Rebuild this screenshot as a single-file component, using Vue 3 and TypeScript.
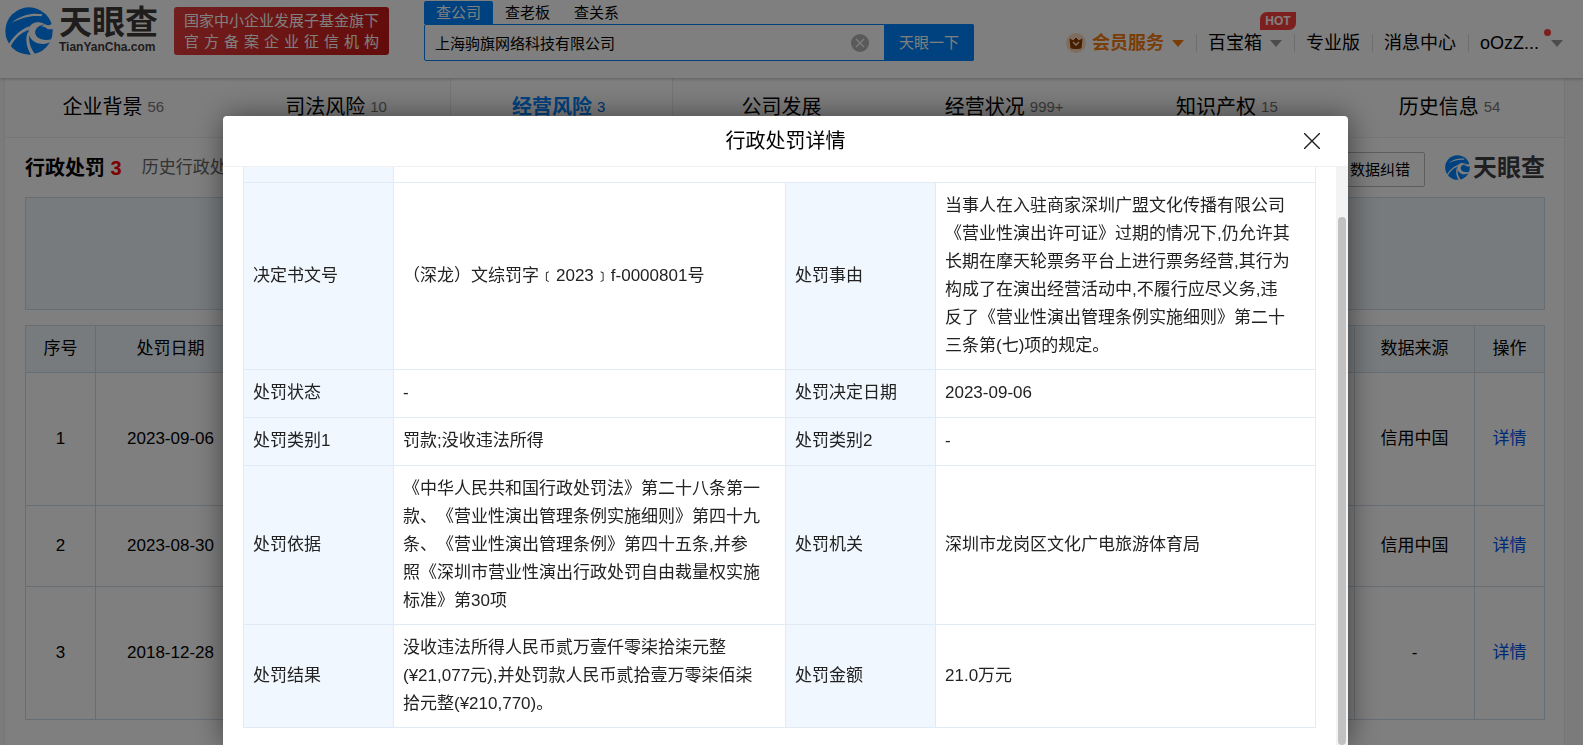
<script setup lang="ts">
import { ref } from 'vue'

interface DetailRow {
  label: string
  value: string
  label2: string
  value2: string
}

interface PenaltyRow {
  index: number
  date: string
  source: string
  size: 'tall' | 'short'
}

const keyword = ref('上海驹旗网络科技有限公司')

const searchTabs = ['查公司', '查老板', '查关系']

const sections = [
  { name: '企业背景', count: '56' },
  { name: '司法风险', count: '10' },
  { name: '经营风险', count: '3' },
  { name: '公司发展', count: '' },
  { name: '经营状况', count: '999+' },
  { name: '知识产权', count: '15' },
  { name: '历史信息', count: '54' },
]

const penalties: PenaltyRow[] = [
  { index: 1, date: '2023-09-06', source: '信用中国', size: 'tall' },
  { index: 2, date: '2023-08-30', source: '信用中国', size: 'short' },
  { index: 3, date: '2018-12-28', source: '-', size: 'tall' },
]

const details: DetailRow[] = [
  {
    label: '决定书文号',
    value: '（深龙）文综罚字﹝2023﹞f-0000801号',
    label2: '处罚事由',
    value2:
      '当事人在入驻商家深圳广盟文化传播有限公司\n《营业性演出许可证》过期的情况下,仍允许其\n长期在摩天轮票务平台上进行票务经营,其行为\n构成了在演出经营活动中,不履行应尽义务,违\n反了《营业性演出管理条例实施细则》第二十\n三条第(七)项的规定。',
  },
  { label: '处罚状态', value: '-', label2: '处罚决定日期', value2: '2023-09-06' },
  { label: '处罚类别1', value: '罚款;没收违法所得', label2: '处罚类别2', value2: '-' },
  {
    label: '处罚依据',
    value:
      '《中华人民共和国行政处罚法》第二十八条第一\n款、《营业性演出管理条例实施细则》第四十九\n条、《营业性演出管理条例》第四十五条,并参\n照《深圳市营业性演出行政处罚自由裁量权实施\n标准》第30项',
    label2: '处罚机关',
    value2: '深圳市龙岗区文化广电旅游体育局',
  },
  {
    label: '处罚结果',
    value:
      '没收违法所得人民币贰万壹仟零柒拾柒元整\n(¥21,077元),并处罚款人民币贰拾壹万零柒佰柒\n拾元整(¥210,770)。',
    label2: '处罚金额',
    value2: '21.0万元',
  },
]
</script>

<template>
  <div class="page">
    <header class="header">
      <a class="logo" href="#" aria-label="天眼查">
        <svg class="logo-mark" viewBox="9 8 144 144" aria-hidden="true">
          <circle cx="81" cy="80" r="71" fill="#0084ff" />
          <path
            d="M156 50C148 64 139 66 128 59C108 48 88 54 81 70C76 90 84 104 100 114C114 121 130 121 146 112L149 105C130 109 112 106 103 94C96 82 101 70 116 67C126 66 132 70 136 74C144 76 152 74 160 70Z"
            fill="#fff"
          />
          <path d="M128 60C118 62 106 66 101 78C98 88 104 98 112 102C102 84 108 72 128 60Z" fill="#0084ff" />
          <path d="M28 56C62 28 96 26 122 30L118 36C92 32 62 38 28 56Z" fill="#fff" />
          <path d="M82 66C52 78 32 98 18 124L24 130C36 104 54 86 80 76Z" fill="#fff" />
          <path d="M78 82C68 104 74 132 88 153L100 151C84 130 78 108 83 88Z" fill="#fff" />
        </svg>
        <span class="logo-words">
          <span class="logo-name">天眼查</span>
          <span class="logo-site">TianYanCha.com</span>
        </span>
      </a>
      <div class="banner">
        <span>国家中小企业发展子基金旗下</span>
        <span>官方备案企业征信机构</span>
      </div>

      <form class="search" @submit.prevent>
        <div class="search-tabs">
          <button
            v-for="(tab, i) in searchTabs"
            :key="tab"
            type="button"
            class="search-tab"
            :class="{ active: i === 0 }"
          >
            {{ tab }}
          </button>
        </div>
        <div class="search-box">
          <input v-model="keyword" class="search-input" type="text" aria-label="搜索公司" />
          <button class="clear" type="button" aria-label="清空">
            <svg viewBox="0 0 18 18" aria-hidden="true">
              <circle cx="9" cy="9" r="9" fill="#b4b4b4" />
              <path d="M5 5l8 8M13 5l-8 8" stroke="#fff" stroke-width="1.2" />
            </svg>
          </button>
          <button class="submit" type="submit">天眼一下</button>
        </div>
      </form>

      <nav class="nav">
        <a class="nav-item vip" href="#">
          <svg class="crown" viewBox="0 0 20 20" aria-hidden="true">
            <circle cx="10" cy="10" r="10" fill="#fcd9bd" />
            <path
              d="M4 6l3 2 3-3 3 3 3-2-1 9q-5 1-10 0z"
              fill="#8c3c00"
              stroke="#8c3c00"
              stroke-linejoin="round"
            />
            <path d="M7 9l3 3 3-3" fill="none" stroke="#fcd9bd" stroke-width="1.6" />
          </svg>
          会员服务<i class="caret"></i>
        </a>
        <a class="nav-item tools" href="#">百宝箱<i class="caret"></i><em class="hot">HOT</em></a>
        <a class="nav-item" href="#">专业版</a>
        <a class="nav-item" href="#">消息中心</a>
        <a class="nav-item user" href="#">oOzZ...<i class="caret"></i><i class="dot"></i></a>
      </nav>
    </header>

    <main class="container">
      <nav class="sections">
        <a
          v-for="(s, i) in sections"
          :key="s.name"
          href="#"
          class="section"
          :class="{ active: i === 2 }"
        >
          {{ s.name }}<span v-if="s.count" class="count">{{ s.count }}</span>
        </a>
      </nav>

      <section class="panel">
        <div class="panel-head">
          <h2>行政处罚 <b>3</b></h2>
          <a class="history" href="#">历史行政处罚</a>
          <button class="report" type="button">数据纠错</button>
          <span class="brand">
            <svg class="brand-mark" viewBox="9 8 144 144" aria-hidden="true">
              <circle cx="81" cy="80" r="71" fill="#0084ff" />
              <path
                d="M156 50C148 64 139 66 128 59C108 48 88 54 81 70C76 90 84 104 100 114C114 121 130 121 146 112L149 105C130 109 112 106 103 94C96 82 101 70 116 67C126 66 132 70 136 74C144 76 152 74 160 70Z"
                fill="#fff"
              />
              <path d="M128 60C118 62 106 66 101 78C98 88 104 98 112 102C102 84 108 72 128 60Z" fill="#0084ff" />
              <path d="M28 56C62 28 96 26 122 30L118 36C92 32 62 38 28 56Z" fill="#fff" />
              <path d="M82 66C52 78 32 98 18 124L24 130C36 104 54 86 80 76Z" fill="#fff" />
              <path d="M78 82C68 104 74 132 88 153L100 151C84 130 78 108 83 88Z" fill="#fff" />
            </svg>
            天眼查
          </span>
        </div>

        <div class="filter"></div>

        <table class="list">
          <colgroup>
            <col class="c-index" />
            <col class="c-date" />
            <col />
            <col class="c-source" />
            <col class="c-action" />
          </colgroup>
          <thead>
            <tr>
              <th>序号</th>
              <th>处罚日期</th>
              <th></th>
              <th>数据来源</th>
              <th>操作</th>
            </tr>
          </thead>
          <tbody>
            <tr v-for="p in penalties" :key="p.index" :class="p.size">
              <td>{{ p.index }}</td>
              <td>{{ p.date }}</td>
              <td></td>
              <td>{{ p.source }}</td>
              <td><a href="#">详情</a></td>
            </tr>
          </tbody>
        </table>
      </section>
    </main>

    <div class="overlay">
      <div class="modal" role="dialog" aria-modal="true" aria-labelledby="dialog-title">
        <div class="modal-head">
          <h3 id="dialog-title">行政处罚详情</h3>
          <button class="close" type="button" aria-label="关闭">
            <svg viewBox="0 0 16 16" aria-hidden="true">
              <path d="M0 0l16 16M16 0L0 16" stroke="#222" stroke-width="1.4" />
            </svg>
          </button>
        </div>
        <div class="modal-body">
          <div class="modal-content">
            <table class="detail">
              <colgroup>
                <col class="d-label" />
                <col class="d-first" />
                <col class="d-label" />
                <col />
              </colgroup>
              <tbody>
                <tr class="stub">
                  <th></th>
                  <td colspan="3"></td>
                </tr>
                <tr v-for="row in details" :key="row.label">
                  <th scope="row">{{ row.label }}</th>
                  <td>{{ row.value }}</td>
                  <th scope="row">{{ row.label2 }}</th>
                  <td>{{ row.value2 }}</td>
                </tr>
              </tbody>
            </table>
          </div>
          <div class="track"><div class="thumb"></div></div>
        </div>
      </div>
    </div>
  </div>
</template>

<style>
body {
  margin: 0;
  background: #f5f5f5;
}
</style>

<style scoped>
.page {
  height: 100vh;
  overflow: hidden;
  background: #f6f6f6;
  color: #000;
  font-family: 'Liberation Sans', 'Noto Sans CJK SC', sans-serif;
  font-size: 17px;
  line-height: 28px;
  text-spacing-trim: space-all;
}
.page * {
  box-sizing: border-box;
}
a {
  color: inherit;
  text-decoration: none;
}
button {
  padding: 0;
  border: 0;
  background: none;
  color: inherit;
  font: inherit;
  cursor: pointer;
}
h2,
h3 {
  margin: 0;
  font-size: 20px;
}
svg {
  display: block;
}

.header {
  position: relative;
  display: flex;
  align-items: flex-start;
  height: 78px;
  padding: 0 20px 0 5px;
  background: #fff;
  box-shadow: 0 1px 3px rgba(0, 0, 0, 0.25);
}
.logo {
  display: flex;
  gap: 6px;
  flex: none;
  width: 169px;
  padding-top: 7px;
}
.logo-mark {
  width: 48px;
  height: 48px;
}
.logo-words {
  display: flex;
  flex-direction: column;
  color: #3e3a39;
  font-weight: bold;
}
.logo-name {
  font-size: 33px;
  line-height: 32px;
}
.logo-site {
  font-size: 12px;
  line-height: 16px;
}
.banner {
  flex: none;
  width: 215px;
  height: 48px;
  margin-top: 7px;
  padding: 3px 10px;
  border-radius: 3px;
  background: linear-gradient(100deg, #e53c3c, #c81818);
  color: #fff;
  font-size: 15px;
  line-height: 21px;
}
.banner span {
  display: block;
  text-align-last: justify;
  white-space: nowrap;
}

.search {
  flex: none;
  width: 550px;
  margin-left: 35px;
  padding-top: 1px;
  font-size: 15px;
}
.search-tabs {
  display: flex;
}
.search-tab {
  height: 23px;
  padding: 0 12px;
  border-radius: 2px 2px 0 0;
  line-height: 21px;
}
.search-tab.active {
  background: #0084ff;
  color: #fff;
}
.search-box {
  display: flex;
  align-items: center;
  height: 37px;
  border: 1px solid #0084ff;
  border-radius: 2px;
}
.search-input {
  flex: 1;
  min-width: 0;
  height: 35px;
  padding: 0 10px;
  border: 0;
  outline: 0;
  background: transparent;
  color: #000;
  font: inherit;
}
.clear {
  width: 18px;
  margin-right: 15px;
}
.submit {
  width: 90px;
  height: 37px;
  margin-right: -1px;
  border-radius: 0 2px 2px 0;
  background: #0084ff;
  color: #fff;
}

.nav {
  display: flex;
  margin-left: auto;
  padding-top: 29px;
  font-size: 18px;
  white-space: nowrap;
}
.nav-item {
  position: relative;
  display: flex;
  align-items: center;
  padding: 0 12px;
}
.nav-item + .nav-item::before {
  content: '';
  position: absolute;
  left: 0;
  height: 18px;
  border-left: 1px solid #ddd;
}
.nav-item.user {
  padding-right: 0;
}
.caret {
  margin-left: 8px;
  border: 6px solid transparent;
  border-top: 7px solid #999;
  border-bottom: 0;
}
.user .caret {
  margin-left: 12px;
}
.vip {
  color: #f37a10;
  font-weight: bold;
}
.vip .caret {
  border-top-color: #f37a10;
}
.crown {
  width: 20px;
  height: 20px;
  margin-right: 6px;
}
.hot {
  position: absolute;
  top: -17px;
  right: -2px;
  width: 36px;
  border-radius: 7px 0;
  background: #fa3e3c;
  color: #fff;
  font-size: 12px;
  font-style: normal;
  font-weight: bold;
  line-height: 18px;
  text-align: center;
}
.dot {
  position: absolute;
  top: 0;
  right: 12px;
  width: 7px;
  height: 7px;
  border-radius: 50%;
  background: #fa3e3c;
}

.container {
  margin: 0 18px 0 4px;
  border: solid #eaeaea;
  border-width: 0 1px;
  background: #fff;
}
.sections {
  display: grid;
  grid-template-columns: repeat(7, 1fr);
  height: 60px;
  border-bottom: 1px solid #ededed;
  background: #fcfcfc;
}
.section {
  display: flex;
  justify-content: center;
  gap: 5px;
  padding: 15px 6px 0 0;
  font-size: 20px;
}
.section.active {
  border: solid #eaeaea;
  border-width: 0 1px;
  background: #fff;
  color: #0084ff;
  font-weight: bold;
}
.count {
  color: #777;
  font-size: 15px;
  font-weight: normal;
}
.active .count {
  color: #0066dd;
}

.panel {
  padding: 0 19px 26px 20px;
}
.panel-head {
  display: flex;
  align-items: center;
  height: 59px;
}
.panel-head b {
  color: #f00;
}
.history {
  margin-left: 20px;
  color: #666;
}
.report {
  width: 90px;
  height: 35px;
  margin: 4px 20px 0 auto;
  border: 1px solid #bbb;
  border-radius: 2px;
  font-size: 15px;
}
.brand {
  display: flex;
  align-items: center;
  gap: 3px;
  color: #3e3f45;
  font-size: 24px;
  font-weight: bold;
}
.brand-mark {
  width: 25px;
  height: 25px;
}
.filter {
  height: 113px;
  margin-bottom: 15px;
  border: 1px solid #cfdce6;
  background: #f0f6fb;
}
table {
  width: 100%;
  border-collapse: collapse;
  table-layout: fixed;
}
.list th,
.list td {
  padding: 0;
  border: 1px solid #cfdce6;
  font-weight: normal;
  text-align: center;
}
.list th {
  height: 47px;
  background: #f0f6fb;
}
.list a {
  color: #0054f0;
}
.tall td {
  height: 133px;
}
.short td {
  height: 81px;
}
.c-index,
.c-action {
  width: 70px;
}
.c-date {
  width: 150px;
}
.c-source {
  width: 120px;
}

.overlay {
  position: fixed;
  inset: 0;
  display: flex;
  justify-content: center;
  padding: 116px 12px 0 0;
  background: rgba(0, 0, 0, 0.5);
}
.modal {
  display: flex;
  flex-direction: column;
  width: 1125px;
  border-radius: 4px 4px 0 0;
  background: #fff;
  box-shadow: 1px 1px 30px rgba(0, 0, 0, 0.5);
}
.modal-head {
  position: relative;
  display: flex;
  align-items: center;
  justify-content: center;
  height: 51px;
  border-bottom: 1px solid #f0f0f0;
}
.modal-head h3 {
  font-weight: normal;
}
.close {
  position: absolute;
  top: 17px;
  right: 28px;
  width: 16px;
}
.modal-body {
  display: flex;
  flex: 1;
  min-height: 0;
}
.modal-content {
  flex: 1;
  padding: 0 20px;
  overflow: hidden;
}
.detail {
  color: #222;
}
.detail th,
.detail td {
  height: 48px;
  padding: 9px;
  border: 1px solid #e0ebf5;
  font-weight: normal;
  text-align: left;
  white-space: pre-line;
}
.detail th {
  background: #f0f7fe;
}
.detail .stub th,
.detail .stub td {
  height: 15px;
  padding: 0;
  border-top: 0;
}
.d-label {
  width: 150px;
}
.d-first {
  width: 392px;
}
.track {
  width: 12px;
  padding: 50px 2px 0;
  background: #f3f3f3;
}
.thumb {
  height: 100%;
  border-radius: 4px;
  background: #c1c1c1;
}
</style>
